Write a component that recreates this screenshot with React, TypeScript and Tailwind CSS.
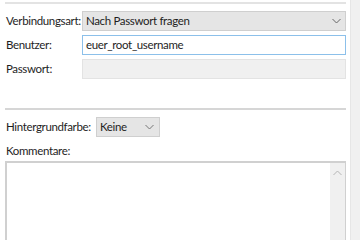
import React from 'react';

const Chevron: React.FC<{ up?: boolean; className?: string }> = ({ up, className }) => (
  <svg width="9" height="6" viewBox="0 0 9 6" className={className} fill="none" stroke="currentColor" strokeWidth={1}>
    <path d={up ? 'M0.5 5 L4.5 1 L8.5 5' : 'M0.5 1 L4.5 5 L8.5 1'} />
  </svg>
);

export default function App() {
  return (
    <div
      className="w-[360px] h-[240px] flex bg-white overflow-hidden text-[11.5px] text-[#1e1e1e] tracking-[-0.35px]"
      style={{ fontFamily: 'Lato, "Noto Sans", sans-serif' }}
    >
      <div className="w-[350px] flex flex-col pl-[5px] pr-[4px] pt-[2px]">
        <div className="h-[2px] bg-[#e3e3e3]" />

        <div className="mt-[7px] flex flex-col gap-[4px]">
          <div className="flex items-center h-[20px]">
            <span className="w-[77px] shrink-0 whitespace-nowrap pl-[1px]">Verbindungsart:</span>
            <div className="flex-1 h-[20px] bg-[#e5e5e5] border border-[#cfcfcf] flex items-center justify-between pl-[3px] pr-[4px]">
              <span className="whitespace-nowrap">Nach Passwort fragen</span>
              <Chevron className="text-[#666]" />
            </div>
          </div>
          <div className="flex items-center h-[20px]">
            <span className="w-[77px] shrink-0 whitespace-nowrap pl-[1px]">Benutzer:</span>
            <div className="flex-1 h-[20px] bg-white border border-[#8cc0ea] flex items-center pl-[3px]">
              <span className="whitespace-nowrap">euer_root_username</span>
            </div>
          </div>
          <div className="flex items-center h-[20px]">
            <span className="w-[77px] shrink-0 whitespace-nowrap pl-[1px]">Passwort:</span>
            <div className="flex-1 h-[20px] bg-[#f0f0f0] border border-[#e3e3e3]" />
          </div>
        </div>

        <div className="mt-[29px] h-[2px] bg-[#d6d6d6]" />

        <div className="mt-[7px] flex items-center h-[20px]">
          <span className="w-[91px] shrink-0 whitespace-nowrap pl-[1px]">Hintergrundfarbe:</span>
          <div className="w-[64px] h-[20px] bg-[#e5e5e5] border border-[#cfcfcf] flex items-center justify-between pl-[3px] pr-[5px]">
            <span>Keine</span>
            <Chevron className="text-[#777]" />
          </div>
        </div>

        <div className="mt-[5px] pl-[1px] h-[17px] leading-[17px]">Kommentare:</div>

        <div className="mt-[2px] flex-1 flex border-t-2 border-l-2 border-r border-[#d0d0d0]">
          <div className="flex-1 bg-white" />
          <div className="w-[15px] bg-[#f0f0f0] flex justify-center pt-[7px]">
            <Chevron up className="text-[#b5b5b5]" />
          </div>
        </div>
      </div>
      <div className="w-[10px] bg-[#f0f0f0] border-l border-[#e6e6e6]" />
    </div>
  );
}
